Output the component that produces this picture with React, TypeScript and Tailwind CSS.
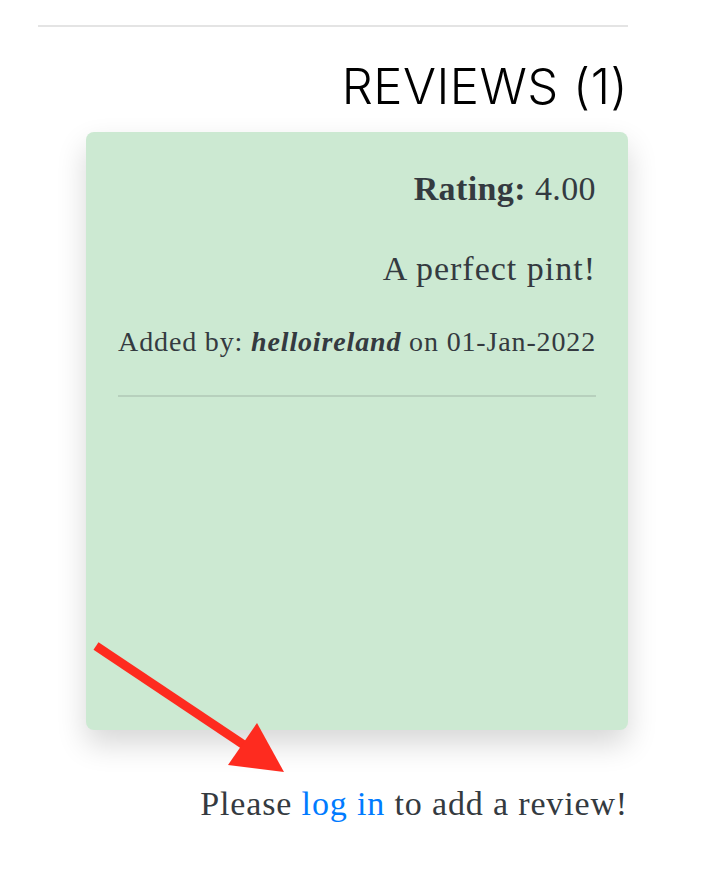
import React from "react";

const serif = "font-['Liberation_Serif',serif]";

const ReviewCard = () => (
  <div
    className={`ml-[48px] h-[598px] rounded-[8px] bg-[#cce9d2] px-[32px] pt-[37px] text-right text-[#343a40] shadow-[0_14px_30px_rgba(0,0,0,0.16)] ${serif}`}
  >
    <p className="text-[34px] leading-[40px] tracking-[0.4px]">
      <span className="font-bold">Rating:</span> 4.00
    </p>
    <p className="mt-[40px] text-[34px] leading-[40px] tracking-[1px]">A perfect pint!</p>
    <p className="mt-[33px] whitespace-nowrap text-[28px] leading-[40px] tracking-[0.85px]">
      Added by: <em className="font-bold">helloireland</em> on 01-Jan-2022
    </p>
    <div className="mt-[33px] h-[2px] bg-[#b7d0bd]" />
  </div>
);

const App = () => {
  return (
    <div className="relative h-[880px] w-[708px] overflow-hidden bg-white pl-[38px] pt-[25px]">
      <div className="w-[590px]">
        <div className="h-[2px] bg-[#e4e4e4]" />
        <h2 className="mt-[30px] mb-[15px] text-right font-['Inter',sans-serif] text-[49px] font-light leading-[60px] tracking-[0.5px] text-black">
          REVIEWS (1)
        </h2>
        <ReviewCard />
        <p className={`mt-[54px] text-right text-[34px] leading-[40px] tracking-[0.85px] text-[#343a40] ${serif}`}>
          Please <a href="#" className="text-[#007bff]">log in</a> to add a review!
        </p>
      </div>

      {/* annotation arrow */}
      <svg
        className="absolute left-0 top-0"
        width="708"
        height="880"
        viewBox="0 0 708 880"
      >
        <line
          x1="96"
          y1="646"
          x2="250"
          y2="749"
          stroke="#fe2b1f"
          strokeWidth="9"
        />
        <polygon points="257,723 228,765 284,772" fill="#fe2b1f" />
      </svg>
    </div>
  );
};

export default App;
